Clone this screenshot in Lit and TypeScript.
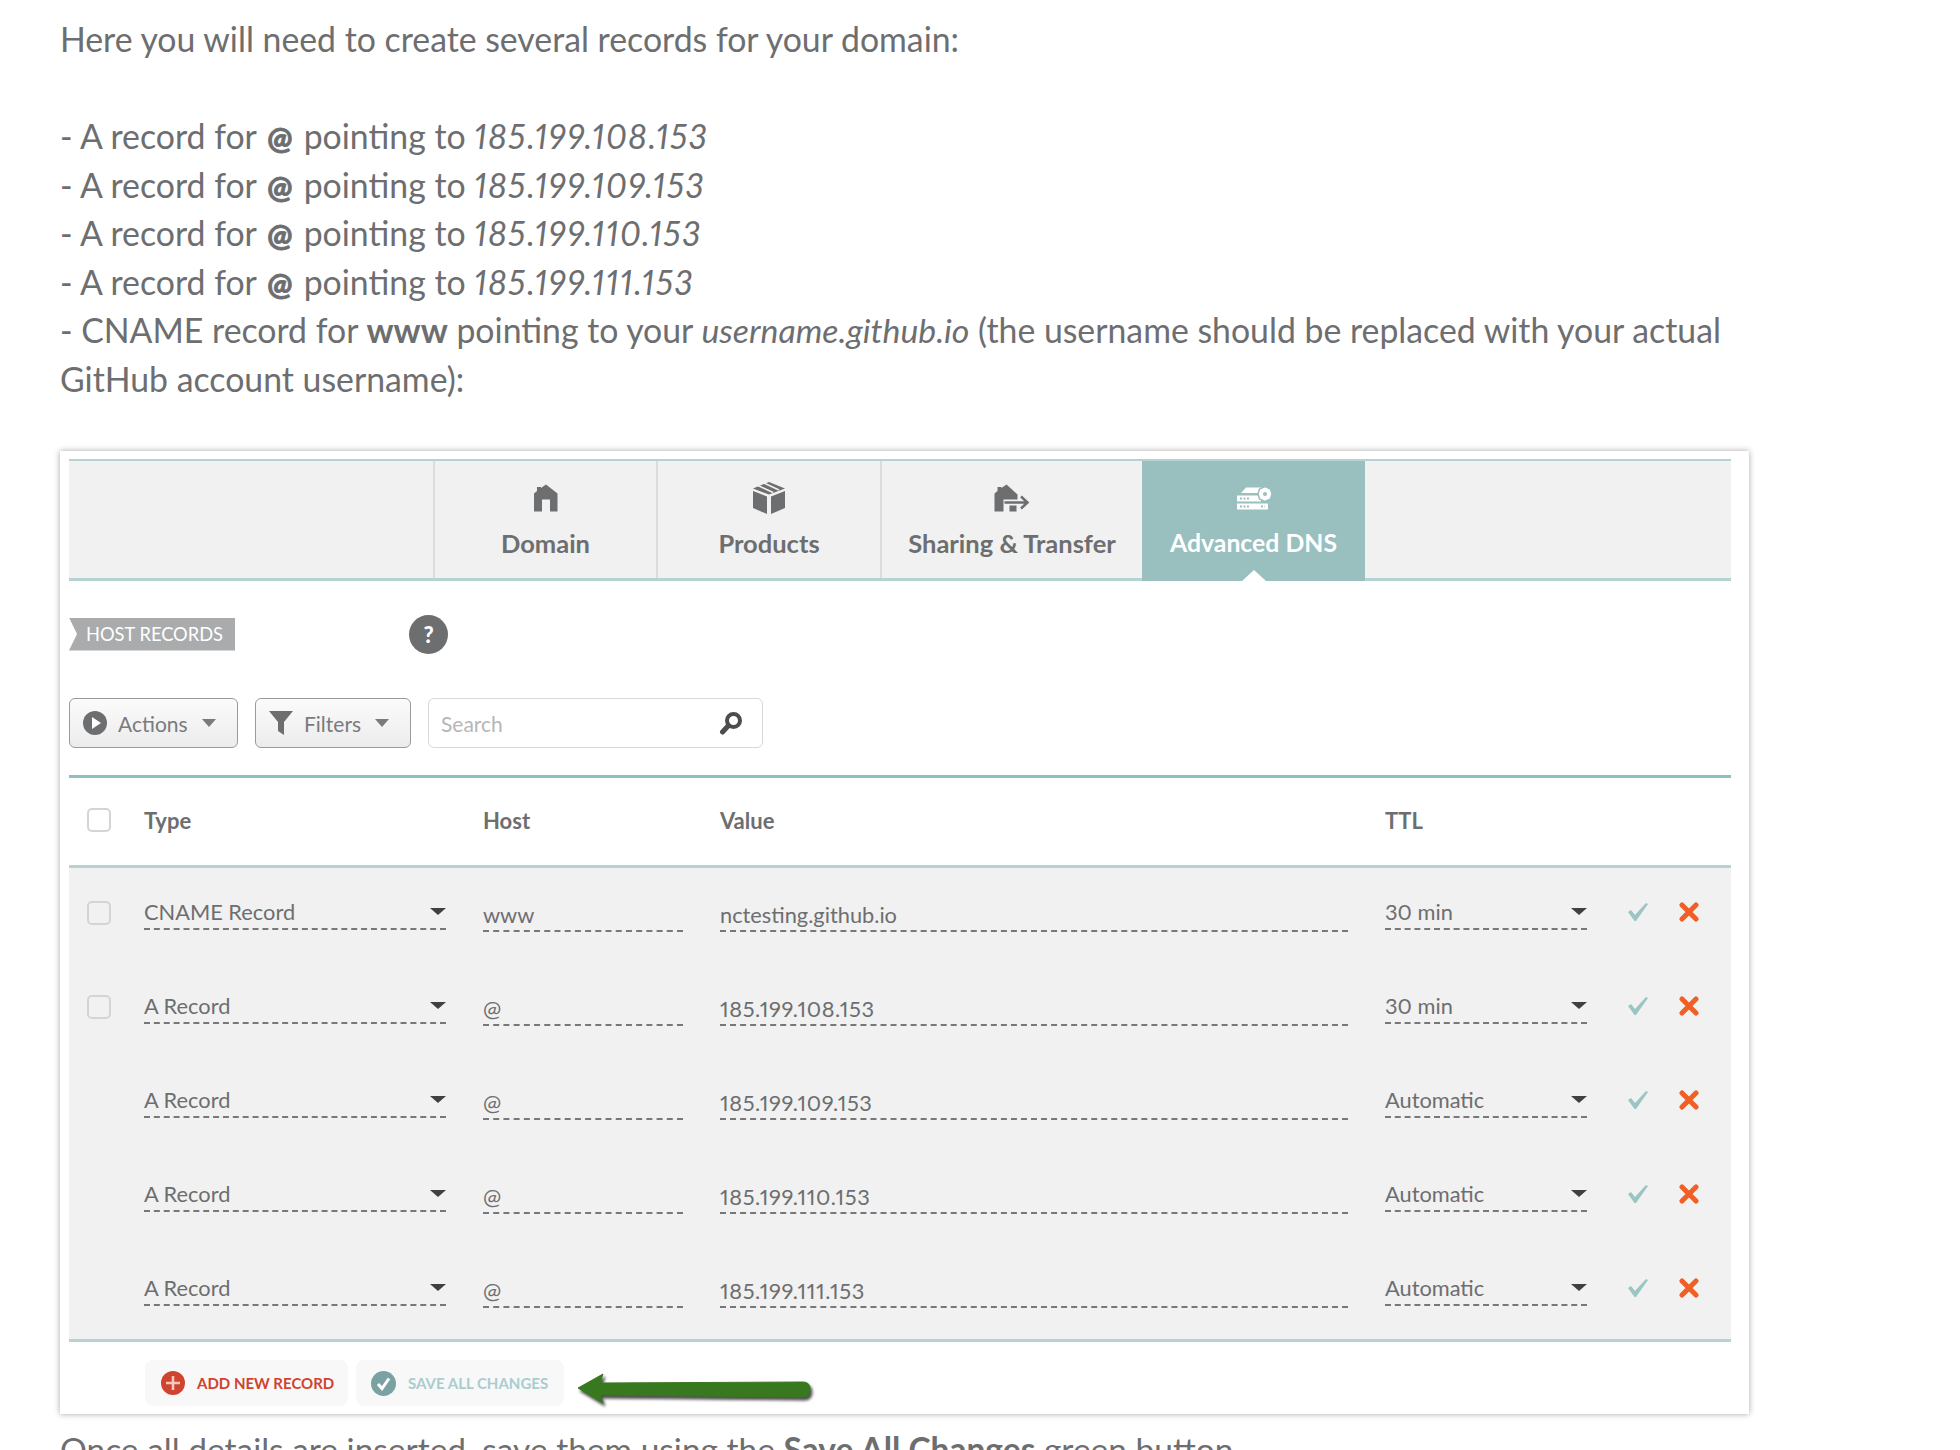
import { LitElement, html, css, svg } from 'lit';
import { customElement } from 'lit/decorators.js';
import { classMap } from 'lit/directives/class-map.js';

interface DnsRow { type: string; host: string; value: string; ttl: string; check: boolean; }

const ROWS: DnsRow[] = [
  { type: 'CNAME Record', host: 'www', value: 'nctesting.github.io', ttl: '30 min', check: true },
  { type: 'A Record', host: '@', value: '185.199.108.153', ttl: '30 min', check: true },
  { type: 'A Record', host: '@', value: '185.199.109.153', ttl: 'Automatic', check: false },
  { type: 'A Record', host: '@', value: '185.199.110.153', ttl: 'Automatic', check: false },
  { type: 'A Record', host: '@', value: '185.199.111.153', ttl: 'Automatic', check: false },
];

const IPS = ['108', '109', '110', '111'];

const homeIcon = svg`<path fill="currentColor" d="M12 0 L23.5 9 V27 H16 V15 H8 V27 H0 V9 L3 6.5 V2.5 H7 V3.5 Z"/>`;
const boxIcon = svg`<path fill="currentColor" d="M16 0 L32 6.5 L16 12.5 L0 6.5 Z M0 9 L14 14.5 V32 L0 26 Z M32 9 V26 L18 32 V14.5 Z"/>
  <path stroke="#f1f1f1" stroke-width="1.6" d="M5 3.5 L20 10.5 M11 1 L26 8"/>`;
const shareIcon = svg`<path fill="currentColor" d="M12 0 L23 10 V15 H9 V27 H0 V9 L3 6.5 V2.5 H7 V3.5 Z"/><rect x="15" y="21" width="7" height="6" fill="currentColor"/>
  <path fill="none" stroke="currentColor" stroke-width="2.5" d="M10 18 H32 M26.5 12 L33 18 L26.5 24"/>`;
const dnsIcon = svg`<path fill="currentColor" d="M4 6.5 L9 1 H24 V6.5 Z"/>
  <rect y="9" width="24" height="6" fill="currentColor"/><rect y="17" width="31" height="6" fill="currentColor"/>
  <path fill="currentColor" stroke="#99bfbf" stroke-width="1.5" d="M28 0 L33.500 2.500 L35 7.500 L33.500 12.500 L28 15 L22.500 12.500 L21 7.500 L22.500 2.500 Z"/>
  <circle cx="28" cy="7.500" r="2" fill="#99bfbf"/>
  <path stroke="#99bfbf" stroke-width="2" stroke-dasharray="2 1.5" d="M3 12 H13 M3 20 H13 M24 20 H28"/>`;

const arrowIcon = svg`<path fill="#38791f" stroke="#38791f" stroke-linejoin="round" d="M3 18 L28 4 L25 13 L228 12 Q235 12 235 19 Q235 27 228 27 L25 25 L28 33 Z"/>`;

@customElement('app-root')
export class AppRoot extends LitElement {
  static styles = css`
    :host {
      display: block;
      height: 1450px;
      overflow: hidden;
      background: #fff;
      color: #6d6e70;
      font-family: Lato, "Liberation Sans", sans-serif;
      font-variant-numeric: proportional-nums;
    }
    .copy {
      margin: 0;
      padding: 15px 0 0 60px;
      font-size: 33.8px;
      line-height: 48.5px;
      font-weight: 400;
      color: #6d6e70;
    }
    .copy b { font-weight: 700; }
    .copy b.at { font-weight: 900; font-size: 0.88em; line-height: 0; margin: 0 2.5px; -webkit-text-stroke: 0.8px #6d6e70; }
    .copy em { font-style: italic; }
    .copy em.ip { letter-spacing: 1.5px; }
    .after { padding-top: 11px; font-size: 33.5px; }

    .card {
      box-sizing: border-box;
      width: 1689px;
      height: 963px;
      margin: 48px 0 0 60px;
      padding: 8px 18px 0 9px;
      background: #fff;
      box-shadow: 0 0 6px rgba(0,0,0,0.35);
    }

    .tabs {
      box-sizing: border-box;
      display: flex;
      height: 122px;
      background: #f1f1f1;
      border-top: 2px solid #b4d3d2;
      border-bottom: 3px solid #b4d3d2;
    }
    .tab-blank { width: 364px; }
    .tab {
      position: relative;
      box-sizing: border-box;
      display: flex;
      flex-direction: column;
      align-items: center;
      border-left: 2px solid #dcdcdc;
      padding-top: 21px;
      font-size: 25.5px;
      font-weight: 700;
      color: #6d6e70;
    }
    .tab svg { height: 32px; width: 36px; display: block; }
    .tab span { margin-top: 13px; line-height: 32px; }
    .tab.active {
      background: #99bfbf;
      color: #fff;
      border-left: none;
      margin-bottom: -3px;
      font-size: 24.8px;
    }
    .tab.active::after {
      content: '';
      position: absolute;
      left: 50%;
      bottom: 0;
      margin-left: -12px;
      border-left: 12px solid transparent;
      border-right: 12px solid transparent;
      border-bottom: 11px solid #fff;
    }

    .hostbar { display: flex; align-items: center; height: 40px; margin-top: 33px; }
    .tag {
      box-sizing: border-box;
      width: 166px;
      height: 33px;
      padding-left: 17px;
      background: #a9abad;
      color: #fff;
      font-size: 18.3px;
      line-height: 33px;
      clip-path: polygon(0 0, 100% 0, 100% 100%, 0 100%, 8px 50%);
    }
    .help {
      display: flex;
      align-items: center;
      justify-content: center;
      width: 39px;
      height: 39px;
      margin-left: 174px;
      border-radius: 50%;
      background: #6d6e70;
      color: #fff;
      font-size: 22px;
      font-weight: 900;
    }

    .toolbar { display: flex; gap: 17px; height: 50px; margin-top: 44px; }
    .btn {
      box-sizing: border-box;
      display: flex;
      align-items: center;
      gap: 11px;
      padding-left: 13px;
      border: 1px solid #9a9a9a;
      border-radius: 6px;
      background: linear-gradient(#fbfbfb, #ececec);
      font-size: 21px;
      color: #7a7b7d;
    }
    .btn svg { display: block; flex: none; }
    .btn i {
      width: 0;
      height: 0;
      margin-left: 3px;
      border-left: 7px solid transparent;
      border-right: 7px solid transparent;
      border-top: 8px solid #7a7b7d;
    }
    .actions { width: 169px; }
    .filters { width: 156px; }
    .search {
      box-sizing: border-box;
      display: flex;
      align-items: center;
      justify-content: space-between;
      width: 335px;
      padding: 0 19px 0 12px;
      border: 1px solid #d8d8d8;
      border-radius: 6px;
      font-size: 21px;
      color: #b5b6b8;
    }

    .grid {
      box-sizing: border-box;
      display: grid;
      grid-template-columns: 20px 302px 200px 628px 202px 1fr;
      column-gap: 37px;
      align-items: center;
      padding-left: 18px;
    }
    .head {
      height: 93px;
      margin-top: 27px;
      padding-bottom: 3px;
      border-top: 3px solid #8fbfc0;
      border-bottom: 3px solid #b4d3d2;
      font-size: 22px;
      font-weight: 700;
    }
    .rows {
      padding-top: 1px;
      background: #f1f1f1;
      border-bottom: 3px solid #b4d3d2;
    }
    .row { height: 94px; font-size: 21.8px; color: #6d6e70; }
    .box {
      box-sizing: border-box;
      width: 24px;
      height: 24px;
      border: 2px solid #d4d4d4;
      border-radius: 5px;
      background: #fff;
    }
    .rows .box { background: #f1f1f1; margin-top: -6px; }
    .select, .input { box-sizing: border-box; border-bottom: 2px dashed #77787a; }
    .select {
      display: flex;
      align-items: center;
      justify-content: space-between;
      height: 35px;
      margin-top: -8px;
    }
    .select i {
      width: 0;
      height: 0;
      border-left: 8px solid transparent;
      border-right: 8px solid transparent;
      border-top: 7px solid #3f4042;
    }
    .input { height: 33px; line-height: 31px; margin-top: -1px; }
    .input.num { letter-spacing: 0.6px; }
    .row-actions { display: flex; align-items: center; gap: 31px; margin-top: -8px; padding-left: 4px; }
    .row-actions svg { display: block; }

    .footer { display: flex; align-items: center; gap: 8px; height: 46px; margin: 18px 0 0 76px; }
    .fbtn {
      box-sizing: border-box;
      display: flex;
      align-items: center;
      gap: 12px;
      height: 46px;
      padding-left: 16px;
      border-radius: 8px;
      background: #f8f8f8;
      font-size: 15px;
      font-weight: 700;
    }
    .add { width: 203px; color: #d0432f; }
    .save { width: 208px; color: #a9cdcf; padding-left: 15px; }
    .fbtn svg { display: block; flex: none; }
    .arrow { display: block; margin: 12px 0 0 3px; filter: drop-shadow(2px 3px 1.5px rgba(0,0,0,0.7)); overflow: visible; }
  `;

  private _row(r: DnsRow) {
    return html`
      <div class="grid row">
        ${r.check ? html`<div class="box"></div>` : html`<div></div>`}
        <div class="select"><span>${r.type}</span><i></i></div>
        <div class="input">${r.host}</div>
        <div class=${classMap({ input: true, num: /^\d/.test(r.value) })}>${r.value}</div>
        <div class="select"><span>${r.ttl}</span><i></i></div>
        <div class="row-actions">
          <svg width="20" height="18" viewBox="0 0 20 18"><path fill="#99c6c4" d="M0 9 L3 7 L7 12 L18 0 L20 1 L8 18 L6.5 18 Z"/></svg>
          <svg width="20" height="20" viewBox="0 0 20 20"><path stroke="#ef5f26" stroke-width="5" stroke-linecap="round" d="M3 3 L17 17 M17 3 L3 17"/></svg>
        </div>
      </div>
    `;
  }

  render() {
    return html`
      <p class="copy">
        Here you will need to create several records for your domain:<br><br>
        ${IPS.map(n => html`- A record for <b class="at">@</b> pointing to <em class="ip">185.199.${n}.153</em><br>`)}
        - CNAME record for <b>www</b> pointing to your <em>username.github.io</em> (the username should be replaced with your actual<br>
        GitHub account username):
      </p>

      <div class="card">
        <div class="tabs">
          <div class="tab-blank"></div>
          <div class="tab" style="width:223px"><svg viewBox="-6 -2.5 36 32">${homeIcon}</svg><span>Domain</span></div>
          <div class="tab" style="width:224px"><svg viewBox="-2 0 36 32">${boxIcon}</svg><span>Products</span></div>
          <div class="tab" style="width:262px"><svg viewBox="-0.5 -2.5 36 32">${shareIcon}</svg><span>Sharing &amp; Transfer</span></div>
          <div class="tab active" style="width:223px"><svg viewBox="-1 -4.5 36 32">${dnsIcon}</svg><span>Advanced DNS</span></div>
        </div>

        <div class="hostbar">
          <div class="tag">HOST RECORDS</div>
          <div class="help">?</div>
        </div>

        <div class="toolbar">
          <div class="btn actions">
            <svg width="24" height="24" viewBox="0 0 24 24"><circle cx="12" cy="12" r="12" fill="#6d6e70"/><path fill="#fff" d="M9 6 L18 12 L9 18 Z"/></svg>
            <span>Actions</span><i></i>
          </div>
          <div class="btn filters">
            <svg width="24" height="26" viewBox="0 0 24 26"><path fill="#6d6e70" d="M0 1 H24 L15 12 V25 L9 21 V12 Z"/></svg>
            <span>Filters</span><i></i>
          </div>
          <div class="search">
            <span>Search</span>
            <svg width="24" height="24" viewBox="0 0 24 24"><circle cx="14.5" cy="9.5" r="6.5" fill="none" stroke="#4c4d4f" stroke-width="4"/><path stroke="#4c4d4f" stroke-width="5" stroke-linecap="round" d="M9.5 14.5 L3.5 21"/></svg>
          </div>
        </div>

        <div class="grid head">
          <div class="box"></div>
          <div>Type</div>
          <div>Host</div>
          <div>Value</div>
          <div>TTL</div>
        </div>

        <div class="rows">${ROWS.map(r => this._row(r))}</div>

        <div class="footer">
          <div class="fbtn add">
            <svg width="24" height="24" viewBox="0 0 24 24"><circle cx="12" cy="12" r="12" fill="#d0432f"/><path stroke="#f6c9bf" stroke-width="2.5" d="M12 5 V19 M5 12 H19"/></svg>
            <span>ADD NEW RECORD</span>
          </div>
          <div class="fbtn save">
            <svg width="25" height="25" viewBox="0 0 25 25"><circle cx="12.5" cy="12.5" r="12.5" fill="#7ba1a3"/><path fill="none" stroke="#fff" stroke-width="3" d="M7 13 L11 17.5 L18 7.5"/></svg>
            <span>SAVE ALL CHANGES</span>
          </div>
          <svg class="arrow" width="240" height="38" viewBox="0 0 240 38">${arrowIcon}</svg>
        </div>
      </div>

      <p class="copy after">Once all details are inserted, save them using the <b>Save All Changes</b> green button.</p>
    `;
  }
}

declare global {
  interface HTMLElementTagNameMap { 'app-root': AppRoot; }
}
